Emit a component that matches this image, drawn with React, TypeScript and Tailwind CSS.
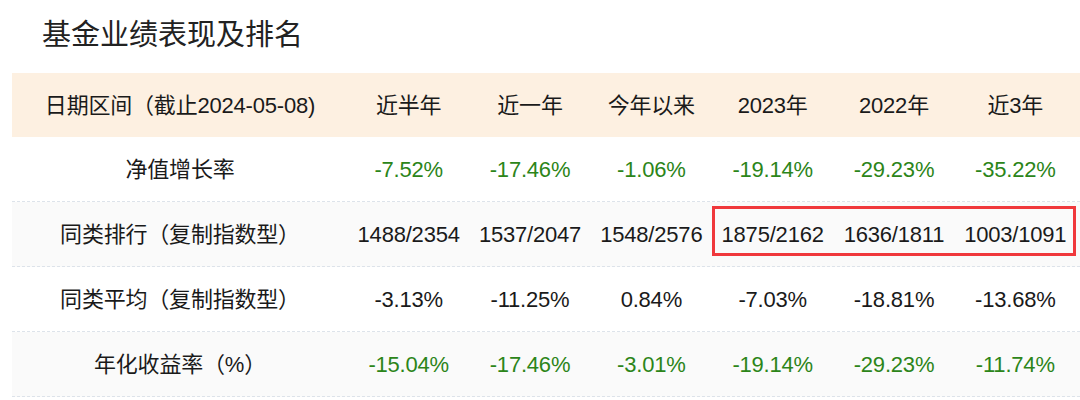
import React from 'react';

type Cell = { text: string; green?: boolean };

const columns = ['近半年', '近一年', '今年以来', '2023年', '2022年', '近3年'];

const rows: { label: string; cells: Cell[]; boxed?: boolean }[] = [
  {
    label: '净值增长率',
    cells: ['-7.52%', '-17.46%', '-1.06%', '-19.14%', '-29.23%', '-35.22%'].map(t => ({ text: t, green: true })),
  },
  {
    label: '同类排行（复制指数型）',
    cells: ['1488/2354', '1537/2047', '1548/2576', '1875/2162', '1636/1811', '1003/1091'].map(t => ({ text: t })),
    boxed: true,
  },
  {
    label: '同类平均（复制指数型）',
    cells: ['-3.13%', '-11.25%', '0.84%', '-7.03%', '-18.81%', '-13.68%'].map(t => ({ text: t })),
  },
  {
    label: '年化收益率（%）',
    cells: ['-15.04%', '-17.46%', '-3.01%', '-19.14%', '-29.23%', '-11.74%'].map(t => ({ text: t, green: true })),
  },
];

const gridCols = 'grid grid-cols-[336px_repeat(6,121.33px)] items-center';

export default function App() {
  return (
    <div
      className="w-[1080px] h-[400px] bg-white overflow-hidden text-[#1a1a1a]"
      style={{ fontFamily: '"Liberation Sans", "Noto Sans CJK SC", sans-serif' }}
    >
      <h1 className="pl-[42px] pt-[15px] h-[73px] text-[29px] leading-[40px] font-normal text-[#222]">
        基金业绩表现及排名
      </h1>

      <div className="ml-[12px]">
        <div className={`${gridCols} h-[64px] bg-[#fdf0e1] text-[22px] tracking-[-0.2px]`}>
          <div className="text-center">日期区间（截止2024-05-08)</div>
          {columns.map(c => (
            <div key={c} className="text-center">{c}</div>
          ))}
        </div>

        {rows.map((row, i) => (
          <div
            key={row.label}
            className={`${gridCols} h-[65px] border-b border-dashed border-[#dde3ea] text-[22px] tracking-[-0.2px] ${
              i % 2 === 1 ? 'bg-[#fafafa]' : 'bg-white'
            }`}
          >
            <div className="row-start-1 col-start-1 text-center">{row.label}</div>
            {row.cells.map((cell, j) => (
              <div
                key={j}
                className={`row-start-1 text-center ${cell.green ? 'text-[#2c8519]' : ''}`}
                style={{ gridColumnStart: j + 2 }}
              >
                {cell.text}
              </div>
            ))}
            {row.boxed && (
              <div className="row-start-1 col-start-5 col-end-8 h-[50px] mt-[-7px] border-[3px] border-[#f0383c]" />
            )}
          </div>
        ))}
      </div>
    </div>
  );
}
